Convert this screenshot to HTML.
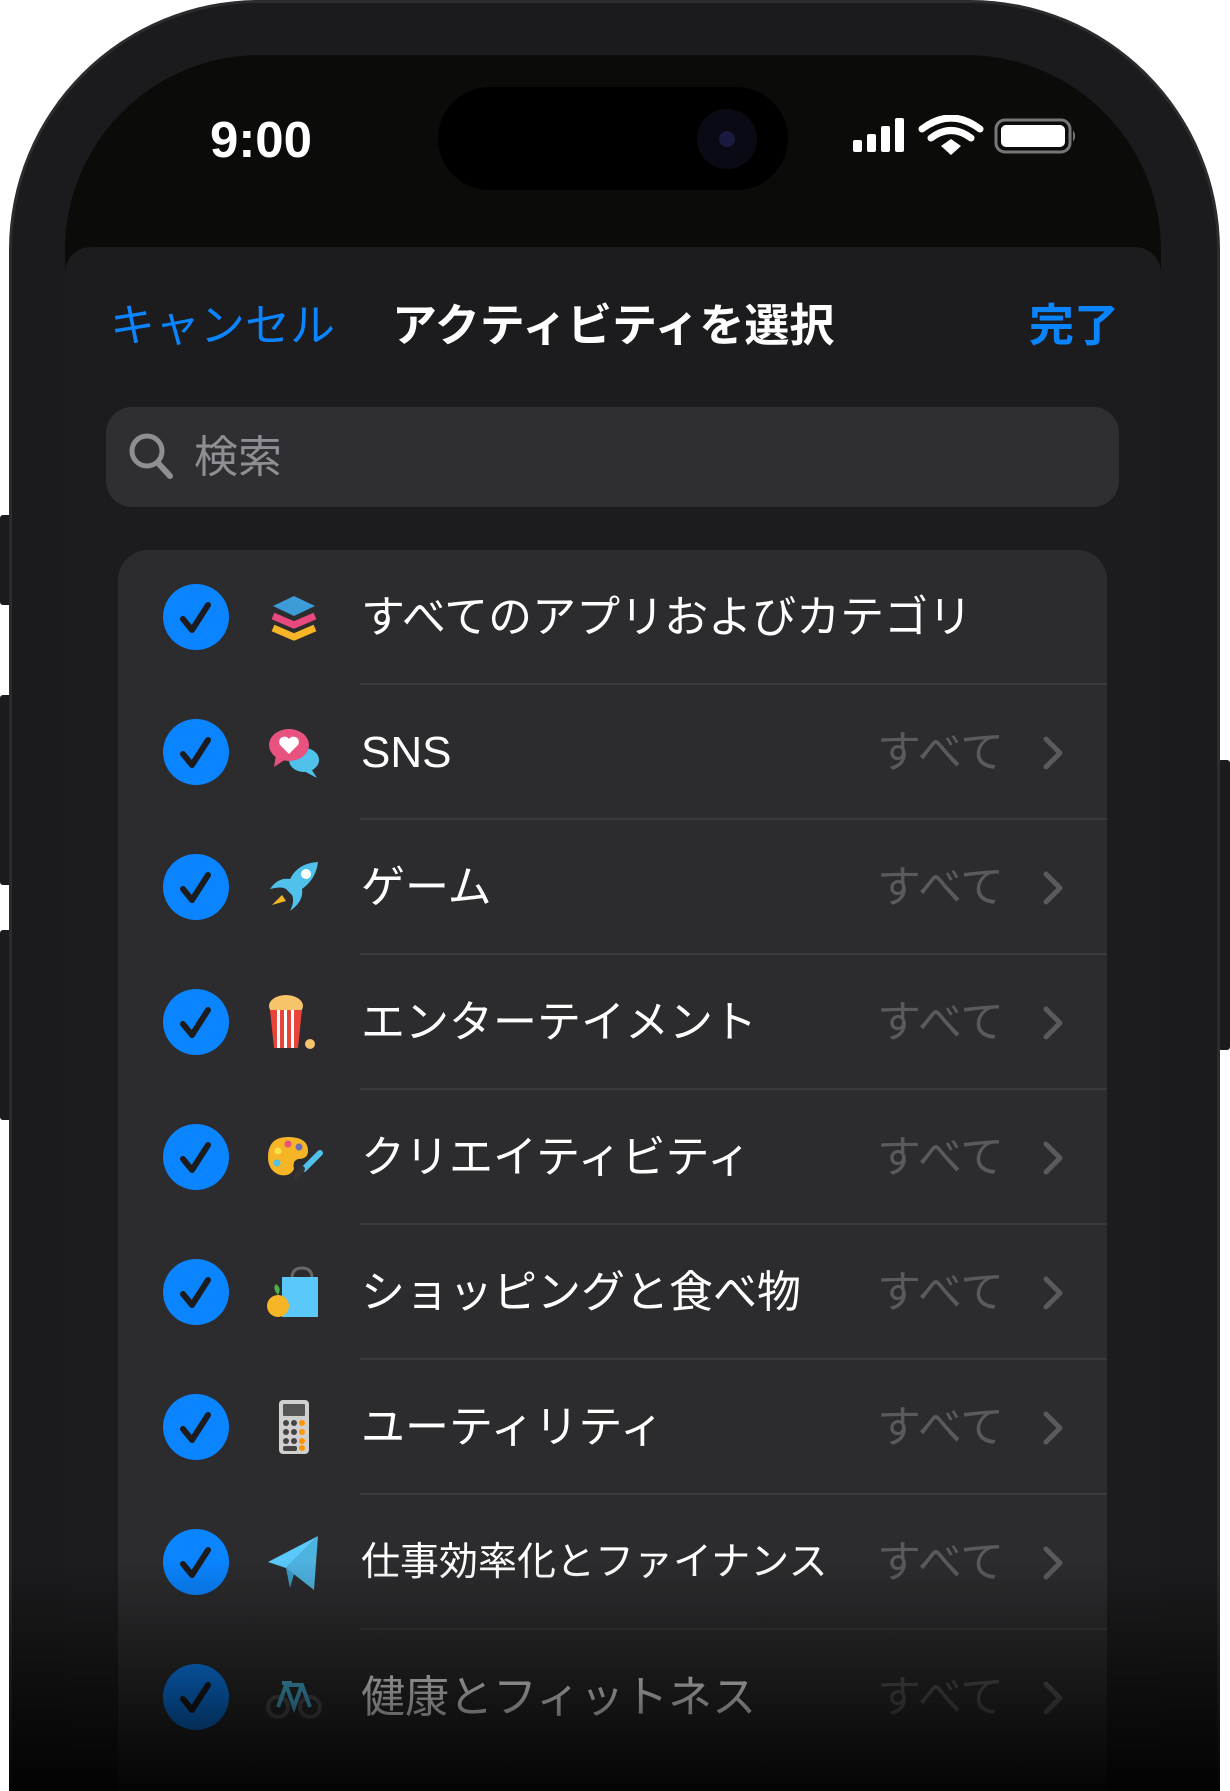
<!DOCTYPE html>
<html><head><meta charset="utf-8"><style>
*{margin:0;padding:0;box-sizing:border-box}
html,body{width:1230px;height:1791px;overflow:hidden}
body{background:#fff;position:relative;font-family:"Liberation Sans","Noto Sans CJK JP",sans-serif}
#wrap{position:absolute;left:0;top:0;width:1230px;height:1791px;overflow:hidden}
.abs{position:absolute}
.phone{left:9px;top:0;width:1211px;height:1791px;background:#1b1b1d;border-radius:250px 250px 0 0;border:3px solid #2c2c2e;border-bottom:none}
.screen{left:65px;top:55px;width:1096px;height:1736px;background:#0b0b09;border-radius:195px 195px 0 0}
.sheet{left:65px;top:247px;width:1096px;height:1544px;background:#1c1c1e;border-radius:26px 26px 0 0}
.btn{background:#1b1b1d;width:12px;border-radius:3px}
.row{position:absolute;left:118px;width:989px;height:135px}
.chk{position:absolute;left:45px;top:34px;width:66px;height:66px;border-radius:50%;background:#0a84ff}
.ico{position:absolute;left:146px;top:37px;width:60px;height:60px}
.lbl{position:absolute;left:243px;top:0;line-height:135px;font-size:44px;color:#fff;white-space:nowrap}
.all{position:absolute;left:759px;top:0;line-height:135px;font-size:44px;color:#5a5a5e}
.chev{position:absolute;left:924px;top:50px;width:24px;height:36px}
.sep{position:absolute;left:242px;right:0;bottom:0;height:2px;background:#3a3a3c}
</style></head><body><div id="wrap">
<div class="abs btn" style="left:0;top:515px;height:90px"></div>
<div class="abs btn" style="left:0;top:695px;height:190px"></div>
<div class="abs btn" style="left:0;top:930px;height:190px"></div>
<div class="abs btn" style="left:1218px;top:760px;height:290px"></div>
<div class="abs phone"></div>
<div class="abs screen"></div>
<div class="abs" style="left:438px;top:87px;width:350px;height:103px;background:#000;border-radius:52px"></div>
<div class="abs" style="left:697px;top:109px;width:60px;height:60px;background:#0a0a14;border-radius:50%"></div>
<div class="abs" style="left:719px;top:131px;width:16px;height:16px;background:#1a1a40;border-radius:50%"></div>
<div class="abs" style="left:200px;top:110px;width:122px;font-size:51px;font-weight:bold;color:#fff;text-align:center;line-height:60px">9:00</div>
<svg class="abs" style="left:850px;top:115px" width="230" height="50" viewBox="0 0 230 50">
<rect x="3" y="25" width="9" height="12" rx="2" fill="#fff"/><rect x="17" y="19" width="9" height="18" rx="2" fill="#fff"/><rect x="31" y="11" width="9" height="26" rx="2" fill="#fff"/><rect x="45" y="3" width="9" height="34" rx="2" fill="#fff"/>
<path d="M72 14 Q101 -8 130 14" stroke="#fff" stroke-width="7" fill="none" stroke-linecap="round"/>
<path d="M81 23 Q101 8 121 23" stroke="#fff" stroke-width="7" fill="none" stroke-linecap="round"/>
<path d="M91 31 L101 24 L111 31 L101 40 Z" fill="#fff"/>
<rect x="146" y="5" width="74" height="32" rx="9" fill="none" stroke="#777" stroke-width="3"/>
<rect x="151" y="10" width="64" height="22" rx="5" fill="#fff"/>
<path d="M223 15 Q227 21 223 27 Z" fill="#777"/>
</svg>
<div class="abs sheet"></div>
<div class="abs" style="left:110px;top:298px;font-size:45px;color:#0a84ff;line-height:56px">キャンセル</div>
<div class="abs" style="left:392px;top:298px;font-size:45px;color:#fff;font-weight:bold;line-height:56px">アクティビティを選択</div>
<div class="abs" style="left:1029px;top:298px;font-size:45px;color:#0a84ff;font-weight:bold;line-height:56px">完了</div>
<div class="abs" style="left:106px;top:407px;width:1013px;height:100px;background:#2f2f33;border-radius:26px"></div>
<svg class="abs" style="left:126px;top:430px" width="50" height="54"><circle cx="21" cy="21" r="15" stroke="#8e8e93" stroke-width="5" fill="none"/><path d="M32 33 L44 46" stroke="#8e8e93" stroke-width="6" stroke-linecap="round"/></svg>
<div class="abs" style="left:194px;top:430px;font-size:44px;color:#8e8e93;line-height:56px">検索</div>
<div class="abs" style="left:118px;top:550px;width:989px;height:1241px;background:#2c2c2e;border-radius:30px 30px 0 0"></div>

<div class="row" style="top:550px"><div class="chk"><svg width="66" height="66"><path d="M20 35 L29 46 L45 21" stroke="#1c1c1e" stroke-width="6" fill="none" stroke-linecap="round" stroke-linejoin="round"/></svg></div>
<svg class="ico" viewBox="0 0 60 60"><path d="M30 9 L51 19 L30 29 L9 19Z" fill="#3d9bd8"/><path d="M9 29 L30 38 L51 29" stroke="#e84a7f" stroke-width="7" fill="none" stroke-linejoin="round"/><path d="M9 41 L30 50 L51 41" stroke="#f6b427" stroke-width="7" fill="none" stroke-linejoin="round"/></svg>
<div class="lbl">すべてのアプリおよびカテゴリ</div><div class="sep"></div></div>

<div class="row" style="top:685px"><div class="chk"><svg width="66" height="66"><path d="M20 35 L29 46 L45 21" stroke="#1c1c1e" stroke-width="6" fill="none" stroke-linecap="round" stroke-linejoin="round"/></svg></div>
<svg class="ico" viewBox="0 0 60 60"><ellipse cx="40" cy="38" rx="15" ry="12" fill="#4fc1ea"/><path d="M46 45 L53 56 L38 48Z" fill="#4fc1ea"/><ellipse cx="25" cy="23" rx="20" ry="16" fill="#e8527f"/><path d="M12 33 L10 45 L22 37Z" fill="#e8527f"/><path d="M25 32 L16 23 A5 5 0 0 1 25 17 A5 5 0 0 1 34 23Z" fill="#fff"/></svg>
<div class="lbl">SNS</div><div class="all">すべて</div><svg class="chev"><path d="M4 4 L18 18 L4 32" stroke="#5a5a5e" stroke-width="5" fill="none" stroke-linecap="round" stroke-linejoin="round"/></svg><div class="sep"></div></div>

<div class="row" style="top:820px"><div class="chk"><svg width="66" height="66"><path d="M20 35 L29 46 L45 21" stroke="#1c1c1e" stroke-width="6" fill="none" stroke-linecap="round" stroke-linejoin="round"/></svg></div>
<svg class="ico" viewBox="0 0 60 60"><path d="M54 5 Q34 6 26 22 Q14 20 6 32 Q18 29 22 32 L28 38 Q31 44 26 54 Q40 44 38 32 Q52 22 54 5Z" fill="#4fc1ea"/><circle cx="42" cy="17" r="5" fill="#fff"/><path d="M18 38 L8 48 L22 44Z" fill="#f6b427"/></svg>
<div class="lbl">ゲーム</div><div class="all">すべて</div><svg class="chev"><path d="M4 4 L18 18 L4 32" stroke="#5a5a5e" stroke-width="5" fill="none" stroke-linecap="round" stroke-linejoin="round"/></svg><div class="sep"></div></div>

<div class="row" style="top:955px"><div class="chk"><svg width="66" height="66"><path d="M20 35 L29 46 L45 21" stroke="#1c1c1e" stroke-width="6" fill="none" stroke-linecap="round" stroke-linejoin="round"/></svg></div>
<svg class="ico" viewBox="0 0 60 60"><ellipse cx="22" cy="14" rx="17" ry="11" fill="#f7c46b"/><path d="M6 18 L38 18 L34 56 L10 56Z" fill="#e8443a"/><rect x="13" y="18" width="3" height="38" fill="#fff"/><rect x="20" y="18" width="3" height="38" fill="#fff"/><rect x="27" y="18" width="3" height="38" fill="#fff"/><circle cx="46" cy="52" r="5" fill="#f7c46b"/></svg>
<div class="lbl">エンターテイメント</div><div class="all">すべて</div><svg class="chev"><path d="M4 4 L18 18 L4 32" stroke="#5a5a5e" stroke-width="5" fill="none" stroke-linecap="round" stroke-linejoin="round"/></svg><div class="sep"></div></div>

<div class="row" style="top:1090px"><div class="chk"><svg width="66" height="66"><path d="M20 35 L29 46 L45 21" stroke="#1c1c1e" stroke-width="6" fill="none" stroke-linecap="round" stroke-linejoin="round"/></svg></div>
<svg class="ico" viewBox="0 0 60 60"><path d="M24 10 Q44 10 44 24 Q44 32 34 32 Q28 34 30 42 Q26 50 16 48 Q4 44 4 30 Q4 10 24 10Z" fill="#f6b427"/><circle cx="14" cy="24" r="3.5" fill="#f7e14a"/><circle cx="24" cy="17" r="3.5" fill="#e8527f"/><circle cx="35" cy="20" r="3.5" fill="#6a6fb8"/><circle cx="13" cy="36" r="3.5" fill="#4fc1ea"/><path d="M56 26 L40 42" stroke="#4fc1ea" stroke-width="6" stroke-linecap="round"/><path d="M38 42 L32 50" stroke="#333" stroke-width="6" stroke-linecap="round"/></svg>
<div class="lbl">クリエイティビティ</div><div class="all">すべて</div><svg class="chev"><path d="M4 4 L18 18 L4 32" stroke="#5a5a5e" stroke-width="5" fill="none" stroke-linecap="round" stroke-linejoin="round"/></svg><div class="sep"></div></div>

<div class="row" style="top:1225px"><div class="chk"><svg width="66" height="66"><path d="M20 35 L29 46 L45 21" stroke="#1c1c1e" stroke-width="6" fill="none" stroke-linecap="round" stroke-linejoin="round"/></svg></div>
<svg class="ico" viewBox="0 0 60 60"><path d="M28 16 Q28 6 38 6 Q48 6 48 16" stroke="#666" stroke-width="3" fill="none"/><rect x="18" y="15" width="36" height="40" fill="#5ac8fa"/><circle cx="14" cy="44" r="11" fill="#f6b427"/><path d="M14 33 Q8 26 12 22 Q18 26 14 33Z" fill="#4caf50"/></svg>
<div class="lbl">ショッピングと食べ物</div><div class="all">すべて</div><svg class="chev"><path d="M4 4 L18 18 L4 32" stroke="#5a5a5e" stroke-width="5" fill="none" stroke-linecap="round" stroke-linejoin="round"/></svg><div class="sep"></div></div>

<div class="row" style="top:1360px"><div class="chk"><svg width="66" height="66"><path d="M20 35 L29 46 L45 21" stroke="#1c1c1e" stroke-width="6" fill="none" stroke-linecap="round" stroke-linejoin="round"/></svg></div>
<svg class="ico" viewBox="0 0 60 60"><rect x="15" y="3" width="30" height="54" rx="4" fill="#d0d0d0"/><rect x="19" y="7" width="22" height="12" rx="1" fill="#555"/><g fill="#444"><circle cx="22" cy="26" r="3"/><circle cx="30" cy="26" r="3"/><circle cx="22" cy="35" r="3"/><circle cx="30" cy="35" r="3"/><circle cx="22" cy="44" r="3"/><circle cx="30" cy="44" r="3"/><rect x="19" y="49" width="14" height="5" rx="2"/></g><g fill="#ff9500"><circle cx="38" cy="26" r="3"/><circle cx="38" cy="35" r="3"/><circle cx="38" cy="44" r="3"/><circle cx="38" cy="51" r="3"/></g></svg>
<div class="lbl">ユーティリティ</div><div class="all">すべて</div><svg class="chev"><path d="M4 4 L18 18 L4 32" stroke="#5a5a5e" stroke-width="5" fill="none" stroke-linecap="round" stroke-linejoin="round"/></svg><div class="sep"></div></div>

<div class="row" style="top:1495px"><div class="chk"><svg width="66" height="66"><path d="M20 35 L29 46 L45 21" stroke="#1c1c1e" stroke-width="6" fill="none" stroke-linecap="round" stroke-linejoin="round"/></svg></div>
<svg class="ico" viewBox="0 0 60 60"><path d="M54 4 L4 30 L22 36Z" fill="#5ac8fa"/><path d="M54 4 L22 36 L50 58Z" fill="#4fb3e0"/><path d="M22 36 L26 56 L30 42Z" fill="#3a9cc8"/></svg>
<div class="lbl" style="font-size:39px">仕事効率化とファイナンス</div><div class="all">すべて</div><svg class="chev"><path d="M4 4 L18 18 L4 32" stroke="#5a5a5e" stroke-width="5" fill="none" stroke-linecap="round" stroke-linejoin="round"/></svg><div class="sep"></div></div>

<div class="row" style="top:1630px"><div class="chk"><svg width="66" height="66"><path d="M20 35 L29 46 L45 21" stroke="#1c1c1e" stroke-width="6" fill="none" stroke-linecap="round" stroke-linejoin="round"/></svg></div>
<svg class="ico" viewBox="0 0 60 60"><circle cx="14" cy="40" r="10" stroke="#555" stroke-width="4" fill="none"/><circle cx="46" cy="40" r="10" stroke="#555" stroke-width="4" fill="none"/><path d="M14 40 L22 18 L38 18 L46 40 M22 18 L30 40 L38 18 M18 16 L28 16" stroke="#4fc1ea" stroke-width="4" fill="none"/></svg>
<div class="lbl">健康とフィットネス</div><div class="all">すべて</div><svg class="chev"><path d="M4 4 L18 18 L4 32" stroke="#5a5a5e" stroke-width="5" fill="none" stroke-linecap="round" stroke-linejoin="round"/></svg></div>

<div class="abs" style="left:9px;top:1560px;width:1211px;height:231px;background:linear-gradient(to bottom,rgba(0,0,0,0) 0%,rgba(0,0,0,0.45) 50%,rgba(0,0,0,0.9) 100%)"></div>
</div></body></html>
